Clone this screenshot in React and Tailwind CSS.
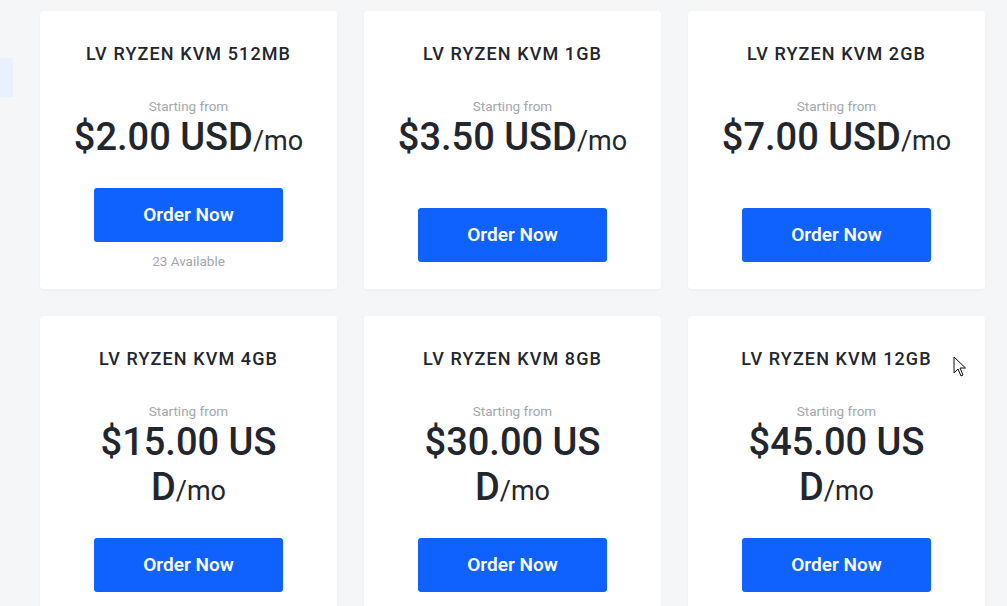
import React from 'react';

const plans = [
  { name: 'LV RYZEN KVM 512MB', price: '$2.00 USD', available: '23 Available' },
  { name: 'LV RYZEN KVM 1GB', price: '$3.50 USD' },
  { name: 'LV RYZEN KVM 2GB', price: '$7.00 USD' },
  { name: 'LV RYZEN KVM 4GB', price: '$15.00 USD' },
  { name: 'LV RYZEN KVM 8GB', price: '$30.00 USD' },
  { name: 'LV RYZEN KVM 12GB', price: '$45.00 USD' },
];

function PlanCard({ plan }) {
  return (
    <div className="flex min-h-[278px] flex-col items-center rounded-[4px] bg-white px-7 pt-[32px] pb-[27px] text-center shadow-[0_1px_3px_rgba(0,0,0,0.04)]">
      <h3 className="text-[18px] leading-[22px] font-medium tracking-[1.1px] text-[#22262e]">{plan.name}</h3>
      <p className="mt-[33px] text-[13.5px] leading-4 text-[#a3a7ae]">Starting from</p>
      {/* price wraps anywhere, but "D/mo" stays together */}
      <p className="mt-[1px] mb-[28px] w-full break-all text-[38px] leading-[45px] font-medium text-[#22262e]">
        {plan.price}
        <span className="whitespace-nowrap text-[27px] leading-none font-normal">/mo</span>
      </p>
      <div className="mt-auto flex flex-col items-center">
        <button className="h-[54px] w-[189px] rounded-[3px] bg-[#0f62fe] text-[19px] font-semibold text-white">
          Order Now
        </button>
        {plan.available && (
          <p className="mt-[11px] -mb-[7px] text-[13.5px] leading-4 text-[#a3a7ae]">{plan.available}</p>
        )}
      </div>
    </div>
  );
}

export default function App() {
  return (
    <div className="relative flex h-[606px] w-[1007px] overflow-hidden bg-[#f4f6f8] font-['Roboto',sans-serif]">
      <aside className="w-[13px] shrink-0 pt-[58px]">
        <div className="h-[39px] bg-[#e8f1fd]" />
      </aside>
      <main className="pl-[27px] pt-[11px]">
        <div className="grid w-[945px] grid-cols-3 gap-[27px]">
          {plans.map((p) => (
            <PlanCard key={p.name} plan={p} />
          ))}
        </div>
      </main>
      <svg className="absolute left-[953px] top-[356px]" width="14" height="22" viewBox="0 0 14 22">
        <path d="M1 1 L1 17 L5 13 L8 20 L10 19 L7 12 L12.5 12 Z" fill="white" stroke="#111" strokeWidth="1" strokeLinejoin="round" />
      </svg>
    </div>
  );
}
